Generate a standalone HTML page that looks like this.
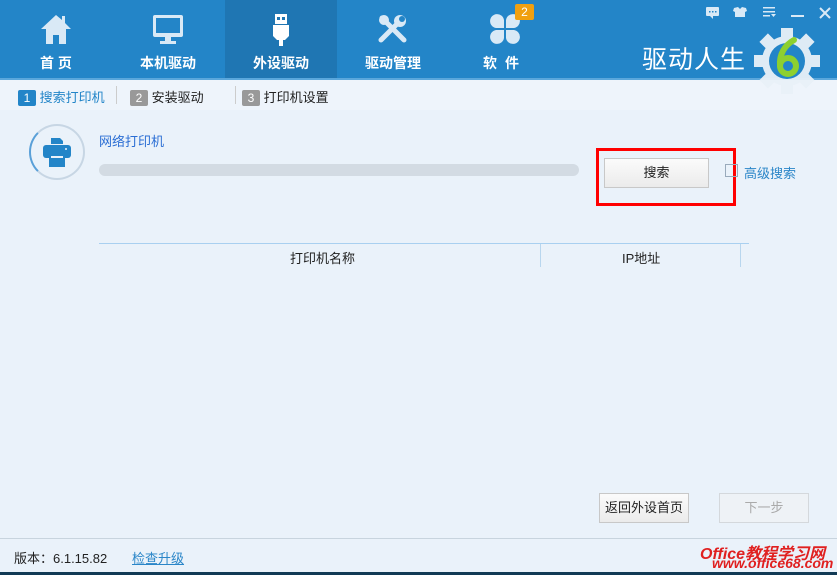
<!DOCTYPE html>
<html><head><meta charset="utf-8"><style>
*{margin:0;padding:0;box-sizing:border-box}
body{width:837px;height:575px;overflow:hidden;background:#eaf2fa;font-family:"Liberation Sans","Noto Sans CJK SC",sans-serif;font-size:13px;color:#222;position:relative}
.hdr{position:absolute;left:0;top:0;width:837px;height:78px;background:#2385c8}
.tab{position:absolute;top:0;width:112px;height:78px;color:#fff;font-weight:bold;font-size:14px;text-align:center}
.tab .lb{position:absolute;top:53px;left:0;width:100%}
.tab svg{position:absolute;top:12px;left:39px}
.abs{position:absolute}
.sub{position:absolute;top:78px;left:0;width:837px;height:32px;background:#eef4fb;border-top:2px solid #5aa7dc}
.num{display:inline-block;width:18px;height:16px;color:#fff;font-size:12px;text-align:center;line-height:16px;border-radius:2px}
.btn{position:absolute;background:linear-gradient(#fbfbfb,#ebebeb);border:1px solid #c8c8c8;text-align:center;font-size:13px}
</style></head><body>
<div class="hdr"></div>
<div class="abs" style="left:225px;top:0;width:112px;height:78px;background:#1f76b3"></div>
<div class="tab" style="left:0"><svg width="34" height="34" viewBox="0 0 34 34"><path d="M17 3 L2 17 H7 V32 H14 V23 H20 V32 H27 V17 H32 L26 11 V4 H23 V8 Z" fill="#d9e9f6"/></svg><div class="lb">首 页</div></div>
<div class="tab" style="left:112px"><svg width="34" height="34" viewBox="0 0 34 34"><rect x="2" y="3" width="30" height="22" rx="2" fill="#d9e9f6"/><rect x="5" y="6" width="24" height="15" fill="#2385c8"/><rect x="14" y="25" width="6" height="4" fill="#d9e9f6"/><rect x="9" y="29" width="16" height="3" fill="#d9e9f6"/></svg><div class="lb">本机驱动</div></div>
<div class="tab" style="left:225px"><svg width="34" height="34" viewBox="0 0 34 34"><rect x="11" y="2" width="12" height="10" fill="#fff"/><rect x="13" y="5" width="3" height="3" fill="#1f76b3"/><rect x="18" y="5" width="3" height="3" fill="#1f76b3"/><path d="M9 13 H25 V24 L21 28 H13 L9 24 Z" fill="#fff"/><rect x="15" y="28" width="4" height="6" fill="#fff"/></svg><div class="lb">外设驱动</div></div>
<div class="tab" style="left:337px"><svg width="34" height="34" viewBox="0 0 34 34"><path d="M5 28 L22 11" stroke="#d9e9f6" stroke-width="5" stroke-linecap="round"/><circle cx="24" cy="9" r="6" fill="#d9e9f6"/><path d="M6 6 L28 28" stroke="#d9e9f6" stroke-width="5" stroke-linecap="round"/><circle cx="8" cy="8" r="5" fill="#d9e9f6"/><circle cx="26" cy="7" r="3" fill="#2385c8"/></svg><div class="lb">驱动管理</div></div>
<div class="tab" style="left:449px"><svg width="34" height="34" viewBox="0 0 34 34" fill="#d9e9f6"><path d="M16 16 V8 a7 7 0 1 0 -8 8 Z"/><path d="M18 16 V8 a7 7 0 1 1 8 8 Z"/><path d="M16 18 V26 a7 7 0 1 1 -8 -8 Z"/><path d="M18 18 V26 a7 7 0 1 0 8 -8 Z"/></svg><div class="lb" style="letter-spacing:8px">软件</div></div>
<div class="abs" style="left:515px;top:4px;width:19px;height:16px;background:#f0a010;color:#fff;font-size:12px;text-align:center;line-height:16px;border-radius:2px">2</div>
<svg class="abs" style="left:700px;top:4px" width="137" height="20" viewBox="0 0 137 20" fill="#d9e9f6"><rect x="6" y="3" width="13" height="9" rx="1"/><path d="M10 12 L13 15 L13 12Z"/><rect x="9" y="7" width="1.5" height="1.5" fill="#2385c8"/><rect x="12" y="7" width="1.5" height="1.5" fill="#2385c8"/><rect x="15" y="7" width="1.5" height="1.5" fill="#2385c8"/><path d="M34 4 L38 3 L40 5 L42 3 L46 4 L47 7 L45 8 V13 H35 V8 L33 7Z"/><rect x="63" y="3" width="12" height="1.5"/><rect x="63" y="7" width="12" height="1.5"/><rect x="63" y="11" width="7" height="1.5"/><path d="M71 10 L76 10 L73.5 13Z"/><rect x="91" y="11" width="13" height="2"/><path d="M120 4 L130 14 M130 4 L120 14" stroke="#d9e9f6" stroke-width="2"/></svg>
<div class="abs" style="left:642px;top:40px;color:#fff;font-size:25px;letter-spacing:1px">驱动人生</div>
<div class="sub"></div>
<svg class="abs" style="left:752px;top:26px" width="70" height="70" viewBox="0 0 70 70"><g fill="#e9f1f8" opacity="0.95"><circle cx="35" cy="35" r="25"/><g transform="translate(35 35)"><rect x="-6" y="-33" width="12" height="12"/><rect x="-6" y="21" width="12" height="12"/><rect x="-33" y="-6" width="12" height="12"/><rect x="21" y="-6" width="12" height="12"/><g transform="rotate(45)"><rect x="-6" y="-33" width="12" height="12"/><rect x="-6" y="21" width="12" height="12"/><rect x="-33" y="-6" width="12" height="12"/><rect x="21" y="-6" width="12" height="12"/></g></g></g><circle cx="35" cy="35" r="18" fill="#2385c8"/><circle cx="36" cy="40" r="8" fill="none" stroke="#8dd02f" stroke-width="6"/><path d="M28 40 C27 28 33 19 42 14" fill="none" stroke="#8dd02f" stroke-width="6" stroke-linecap="round"/></svg>
<div class="abs" style="left:18px;top:87px;color:#2385c8;font-size:13px"><span class="num" style="background:#2385c8">1</span> 搜索打印机</div>
<div class="abs" style="left:116px;top:86px;width:1px;height:18px;background:#ccc"></div>
<div class="abs" style="left:130px;top:87px"><span class="num" style="background:#999">2</span> 安装驱动</div>
<div class="abs" style="left:235px;top:86px;width:1px;height:18px;background:#ccc"></div>
<div class="abs" style="left:242px;top:87px"><span class="num" style="background:#999">3</span> 打印机设置</div>
<div class="abs" style="left:29px;top:124px;width:56px;height:56px;border-radius:50%;border:2px solid #c7d6e4;border-left-color:#5aa0d8"></div>
<svg class="abs" style="left:42px;top:138px" width="30" height="30" viewBox="0 0 30 30" fill="#2385c8"><path d="M9 0 H18 L21 3 V6 H9Z"/><rect x="1" y="7" width="28" height="13" rx="3"/><rect x="7" y="16" width="16" height="13" fill="#2385c8"/><rect x="9" y="18" width="12" height="2" fill="#eaf2fa"/><circle cx="24" cy="11" r="1" fill="#eaf2fa"/></svg>
<div class="abs" style="left:99px;top:131px;color:#2b6ed4;font-size:13px">网络打印机</div>
<div class="abs" style="left:99px;top:164px;width:480px;height:12px;border-radius:6px;background:#d3dbe3"></div>
<div class="btn" style="left:604px;top:158px;width:105px;height:30px;line-height:28px">搜索</div>
<div class="abs" style="left:596px;top:148px;width:140px;height:58px;border:3px solid #f00"></div>
<div class="abs" style="left:725px;top:164px;width:13px;height:13px;border:1px solid #9ab"></div>
<div class="abs" style="left:744px;top:163px;color:#2a86c8;font-size:13px">高级搜索</div>
<div class="abs" style="left:99px;top:243px;width:650px;height:1px;background:#a9d0f0"></div>
<div class="abs" style="left:540px;top:244px;width:1px;height:23px;background:#b8d6ee"></div>
<div class="abs" style="left:740px;top:244px;width:1px;height:23px;background:#b8d6ee"></div>
<div class="abs" style="left:290px;top:248px">打印机名称</div>
<div class="abs" style="left:622px;top:248px">IP地址</div>
<div class="btn" style="left:599px;top:493px;width:90px;height:30px;line-height:28px">返回外设首页</div>
<div class="btn" style="left:719px;top:493px;width:90px;height:30px;line-height:28px;color:#aaa;background:#eef2f6;border-color:#d4d8dc">下一步</div>
<div class="abs" style="left:0;top:538px;width:837px;height:1px;background:#c8d4de"></div>
<div class="abs" style="left:14px;top:548px">版本：6.1.15.82</div>
<div class="abs" style="left:132px;top:548px;color:#2a86c8;text-decoration:underline">检查升级</div>
<div class="abs" style="left:700px;top:540px;color:#e02020;font-weight:bold;font-style:italic;font-size:16px">Office教程学习网</div>
<div class="abs" style="left:712px;top:555px;color:#e02020;font-weight:bold;font-style:italic;font-size:14px">www.office68.com</div>
<div class="abs" style="left:0;top:572px;width:837px;height:3px;background:#123a55"></div>
</body></html>
